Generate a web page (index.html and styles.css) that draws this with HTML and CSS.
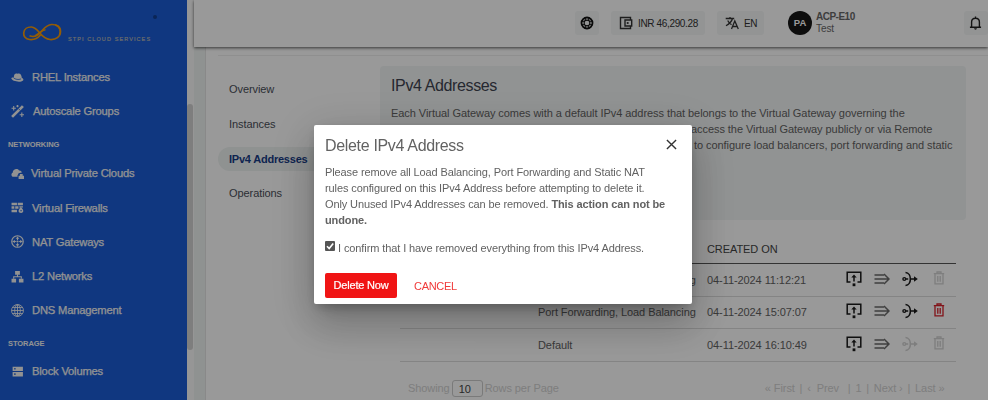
FILE: index.html
```html
<!DOCTYPE html>
<html lang="en">
<head>
<meta charset="utf-8">
<title>IPv4 Addresses</title>
<link rel="stylesheet" href="styles.css">
</head>
<body>
<svg class="defs" width="0" height="0">
  <symbol id="assign" viewBox="0 0 16 16"><path d="M4.500 11H1.200V1.200h13.600V11h-3.300" fill="none" stroke="currentColor" stroke-width="1.500"/><path d="M8 10.500V5" stroke="currentColor" stroke-width="1.500"/><path d="M5.300 6.600 8 3.400l2.700 3.200z" fill="currentColor"/><path d="M6.600 12.400h2.800v2.800H6.600z" fill="currentColor"/></symbol>
  <symbol id="forward" viewBox="0 0 16 16"><path d="M.5 4h9.500M.5 8h14M.5 12h9.500M10 3l5 5-5 5" fill="none" stroke="currentColor" stroke-width="1.500"/></symbol>
  <symbol id="balance" viewBox="0 0 16 16"><circle cx="2.300" cy="8" r="1.400" fill="none" stroke="currentColor" stroke-width="1.400"/><path d="M3.700 8h2.500M3.500 1.500c6.500.3 6.500 12.700 0 13M8.500 8h5" fill="none" stroke="currentColor" stroke-width="1.600"/><path d="M12 5.200 15.800 8 12 10.800z" fill="currentColor"/></symbol>
  <symbol id="trash" viewBox="0 0 12 14"><path d="M.8 2.600h10.400M4 2.300V1h4v1.300M2 2.800v10h8v-10M4.800 5v5.700M7.200 5v5.700" fill="none" stroke="currentColor" stroke-width="1.300"/></symbol>
</svg>
<div class="app">
  <aside class="sidebar">
    <div class="brand">
      <svg class="logo" viewBox="0 0 40 18"><path d="M18.500 11.500C15 15.500 11 16.500 7.500 16 3.500 15.500 1.500 12.500 1.700 9.500 2 5.500 5.500 3.300 9.500 3.500 17 4 18 15 28 16c6 .5 10.500-3 10.500-8S34.500.800 29.500 1C23 1.300 20.500 8 15.500 11.500 13 13.200 10 13.300 7.500 12.300" fill="none" stroke="#f79a0a" stroke-width="1.700"/><path d="M13.500 12C17 10.500 19.500 6.500 23.500 6.200M33 1.300c5 1.500 6.500 6.500 4.300 10.500" fill="none" stroke="#f79a0a" stroke-width="1.500"/></svg>
      <span class="brand-name">STPI CLOUD SERVICES</span>
      <span class="pin"></span>
    </div>
    <nav class="menu">
      <a class="item"><svg viewBox="0 0 12 12"><path d="M2.500 6C3 2.500 4 2 6 2.500c3-.5 3.500 1 4 4 2 .5 2 2.500-.5 3.200C6 10.500.5 9 .3 6.800.3 6 1.500 5.800 2.500 6z" fill="currentColor"/><path d="M2.300 6.300c1.700 1.500 4.500 2 7 1" stroke="#1b5dd5" stroke-width=".7" fill="none"/></svg><span>RHEL Instances</span></a>
      <a class="item wand"><svg viewBox="0 0 12 12"><path d="M1 11 11 1" stroke="currentColor" stroke-width="2.500"/><path d="m7 3.500 1.700 1.700" stroke="#1b5dd5" stroke-width=".7"/><path d="M2.500 1v4M.5 3h4M6 0v2M5 1h2M10 7v4M8 9h4" stroke="currentColor"/></svg><span>Autoscale Groups</span></a>
      <h2>NETWORKING</h2>
      <a class="item"><svg viewBox="0 0 12 12"><path d="M5 9H2.500C0 9-.2 6 1.600 5.300 1.300 2 6 .5 7.400 3.200 9.500 3 10 4.500 9.800 5.300 7.500 5 6.500 6 6.500 7L6 7.500V9z" fill="currentColor"/><path d="M7 8h5v3H7zM8.200 8V6.500h2.600V8" fill="currentColor"/></svg><span class="nudge">Virtual Private Clouds</span></a>
      <a class="item"><svg viewBox="0 0 12 12"><path d="M.5 1.500h5V4h-5zM6.200 1.500h4.800V4H6.200zM.5 4.800h2.600v2.300H.5zM3.900 4.800h3v2.300h-3zM.5 8h5v2.300h-5zM7.700 4.800H11V6H7.700z" fill="currentColor"/><path d="M9 5.600c3 2.400 3 5.400.3 5.400S6 9 9 5.600z" fill="currentColor"/><path d="M8.800 8.200h1v1.200h-1z" fill="#1b5dd5"/></svg><span>Virtual Firewalls</span></a>
      <a class="item"><svg viewBox="0 0 12 12"><circle cx="6" cy="6" r="5.300" fill="none" stroke="currentColor" stroke-width="1.100"/><circle cx="6" cy="6" r="1" fill="currentColor"/><path d="M6 1.500v3M6 7.500v3M1.500 6h3M7.500 6h3" stroke="currentColor"/><path d="m6 1.500 1.700 2H4.300zM6 10.500l1.700-2H4.300zM1.500 6l2-1.700v3.400zM10.500 6l-2-1.700v3.400z" fill="currentColor"/></svg><span>NAT Gateways</span></a>
      <a class="item"><svg viewBox="0 0 12 12"><path d="M3.800 1h4.400v3.300H3.800zM.5 8h4.200v3.500H.5zM7.300 8h4.200v3.500H7.300z" fill="currentColor"/><path d="M6 4v2.300M2.500 8V6.300h7V8" stroke="currentColor" fill="none"/></svg><span>L2 Networks</span></a>
      <a class="item"><svg viewBox="0 0 12 12"><g fill="none" stroke="currentColor" stroke-width=".8"><circle cx="6" cy="6" r="5.500"/><ellipse cx="6" cy="6" rx="2.600" ry="5.500"/><path d="M6 .5v11M.5 6h11M1.300 3.200h9.400M1.300 8.800h9.400"/></g></svg><span>DNS Management</span></a>
      <h2 class="storage">STORAGE</h2>
      <a class="item"><svg viewBox="0 0 12 12"><path d="M1.500 1.500H11v4H1.500zM1.500 6.500H11v4H1.500z" fill="currentColor"/><path d="M3 2.700h1.200v1.500H3zM3 7.700h1.200v1.500H3z" fill="#1b5dd5"/></svg><span>Block Volumes</span></a>
    </nav>
  </aside>
  <div class="track"><div class="thumb"></div></div>
  <div class="main">
    <header class="topbar">
      <span class="chip help"><svg viewBox="0 0 14 14"><circle cx="7" cy="7" r="5.500" fill="none" stroke="currentColor" stroke-width="1.800"/><circle cx="7" cy="7" r="2.900" fill="none" stroke="currentColor" stroke-width="1.100"/><path d="M5.300 1v3M8.700 1v3M5.300 10v3M8.700 10v3M1 5.300h3M1 8.700h3M10 5.300h3M10 8.700h3" stroke="currentColor"/></svg></span>
      <span class="chip wallet"><svg viewBox="0 0 14 14"><path d="M11.500 4V1.500h-10v11h10V10" fill="none" stroke="currentColor" stroke-width="1.400"/><path d="M6 4h6.700v6H6z" fill="none" stroke="currentColor" stroke-width="1.400"/><circle cx="8.700" cy="7" r="1.100" fill="currentColor"/></svg>INR 46,290.28</span>
      <span class="chip lang"><svg viewBox="0 0 14 14"><path d="M.7 2.500h8.500M5 1v1.500M7.500 2.500C6.800 5.500 4 8 1 9.700M2.700 4.500C3.500 6.300 5 7.700 6.500 8.700M6.500 13 9.800 5l3.500 8M7.700 10.500h4.300" fill="none" stroke="currentColor" stroke-width="1.300"/></svg>EN</span>
      <span class="avatar">PA</span>
      <span class="account"><b>ACP-E10</b><span>Test</span></span>
      <span class="chip bell"><svg viewBox="0 0 14 16"><path d="M1 12.500h12M2.800 12.500V7c0-5.500 8.400-5.500 8.400 0v5.500M7 2.800V1" fill="none" stroke="currentColor" stroke-width="1.500"/><path d="M5.500 13.700h3c0 2-3 2-3 0z" fill="currentColor"/></svg></span>
    </header>
    <div class="card">
      <nav class="tabs"><a>Overview</a><a>Instances</a><a class="active">IPv4 Addresses</a><a>Operations</a></nav>
      <section class="content">
        <div class="info">
          <h1>IPv4 Addresses</h1>
          <p>Each Virtual Gateway comes with a default IPv4 address that belongs to the Virtual Gateway governing the</p>
          <p class="l2">access the Virtual Gateway publicly or via Remote</p>
          <p class="l3">to configure load balancers, port forwarding and static</p>
        </div>
        <div class="table">
          <div class="row head"><span></span><span></span><span>CREATED ON</span></div>
          <div class="row"><span></span><span>Port Forwarding, Load Balancing</span><span>04-11-2024 11:12:21</span><span class="actions"><svg><use href="#assign"/></svg><svg class="mid"><use href="#forward"/></svg><svg><use href="#balance"/></svg><svg class="off bin"><use href="#trash"/></svg></span></div>
          <div class="row"><span><i class="mask"></i></span><span>Port Forwarding, Load Balancing</span><span>04-11-2024 15:07:07</span><span class="actions"><svg><use href="#assign"/></svg><svg class="mid"><use href="#forward"/></svg><svg><use href="#balance"/></svg><svg class="red bin"><use href="#trash"/></svg></span></div>
          <div class="row"><span></span><span>Default</span><span>04-11-2024 16:10:49</span><span class="actions"><svg><use href="#assign"/></svg><svg class="mid"><use href="#forward"/></svg><svg class="off"><use href="#balance"/></svg><svg class="off bin"><use href="#trash"/></svg></span></div>
        </div>
        <div class="pager">
          <span>Showing</span><span class="count">10</span><span>Rows per Page</span>
          <span class="pages"><span>« First</span><span>|</span><span>‹&nbsp; Prev</span><span class="gap">|</span><span>1</span><span>|</span><span>Next ›</span><span>|</span><span>Last »</span></span>
        </div>
      </section>
    </div>
  </div>
</div>
<div class="overlay">
  <i class="mask lit"></i>
  <div class="dialog">
    <div class="dialog-head"><h2>Delete IPv4 Address</h2><svg class="close" viewBox="0 0 12 12"><path d="m1 1 10 10M11 1 1 11" stroke="#333" stroke-width="1.500"/></svg></div>
    <p>Please remove all Load Balancing, Port Forwarding and Static NAT<br>rules configured on this IPv4 Address before attempting to delete it.<br>Only Unused IPv4 Addresses can be removed. <b>This action can not be<br>undone.</b></p>
    <div class="confirm"><span class="check"><svg viewBox="0 0 10 10"><path d="m2 5.200 2.200 2.300L8.200 2.500" fill="none" stroke="#fff" stroke-width="1.600"/></svg></span><span>I confirm that I have removed everything from this IPv4 Address.</span></div>
    <div class="buttons"><span class="delete">Delete Now</span><span class="cancel">CANCEL</span></div>
  </div>
</div>
</body>
</html>
```
FILE: styles.css
```css
* { box-sizing: border-box; }
body { margin: 0; width: 988px; height: 400px; overflow: hidden; background: #fff; font-family: "Liberation Sans", Arial, sans-serif; font-size: 11px; letter-spacing: -.08px; color: #626262; }
h1, h2, p { margin: 0; font-weight: 400; }
.defs { position: absolute; }
.app { display: flex; height: 400px; }

.sidebar { width: 187px; background: #1b5dd5; color: #f4f4f4; overflow: hidden; flex: none; }
.brand { display: flex; height: 60px; padding-left: 22px; }
.logo { width: 40px; height: 19px; margin-top: 23px; }
.brand-name { margin: 35px 0 0 6px; font-size: 5.5px; line-height: 9px; letter-spacing: 1.1px; color: #b4b4b4; -webkit-text-stroke: .2px; white-space: nowrap; width: 85px; }
.pin { width: 4px; height: 4px; border-radius: 50%; background: #123e91; margin: 15px 0 0 0; }
.menu .item { display: flex; align-items: center; height: 34.2px; padding-left: 11px; font-size: 11.2px; letter-spacing: -.18px; -webkit-text-stroke: .25px; }
.item svg { width: 13px; height: 13px; margin-right: 8px; flex: none; }
.item.wand svg { margin-right: 9px; }
.item .nudge { margin-left: -1px; }
.menu h2 { height: 28px; padding: 11px 0 0 8px; font-size: 7.5px; line-height: 12px; font-weight: 700; }
.menu .storage { height: 27px; }

.track { width: 7px; background: #fafafa; padding-top: 104px; flex: none; }
.thumb { width: 6px; height: 246px; background: #d2d2d2; border-radius: 3px; }
.main { flex: 1; background: #eff3f2; min-width: 0; }
.topbar { position: relative; height: 47px; background: #fff; box-shadow: 0 1px 3px rgba(0,0,0,.65); display: flex; align-items: flex-start; padding: 11px 0 0 381px; white-space: nowrap; }
.chip { height: 24px; background: #f5f7f7; border-radius: 3px; display: flex; align-items: center; color: #333; font-size: 10px; letter-spacing: -.35px; margin-right: 12px; flex: none; }
.chip svg { width: 14px; height: 14px; }
.help { width: 24px; justify-content: center; color: #111; }
.wallet { width: 94px; padding-left: 8px; gap: 5px; }
.lang { width: 47px; padding-left: 8px; gap: 5px; margin-right: 24px; }
.avatar { width: 24px; height: 24px; border-radius: 50%; background: #161616; color: #fff; font-size: 9.5px; font-weight: 700; line-height: 24px; text-align: center; flex: none; }
.account { display: flex; flex-direction: column; font-size: 10px; line-height: 12px; margin-left: 4px; width: 157px; color: #686868; }
.account b { letter-spacing: -.5px; }
.bell { width: 24px; padding-left: 5px; margin: 0; color: #222; flex: none; }
.bell svg { width: 13px; height: 16px; }

.card { margin-left: 11px; height: 353px; background: #fff; border-left: 1px solid #e4e4e4; display: flex; padding-top: 8px; }
.tabs { width: 162px; margin-left: 12px; border-top: 1px solid #eee; padding-top: 21px; flex: none; }
.tabs a { display: block; height: 24px; line-height: 24px; padding-left: 11px; margin-bottom: 10.800px; width: 132px; border-radius: 12px; color: #4a4e58; }
.tabs .active { background: #eff3f2; color: #173c86; font-weight: 700; letter-spacing: -.22px; }
.content { flex: 1; border-top: 1px solid #eee; padding-top: 10px; }
.info { width: 586px; height: 154px; background: #f2f5f5; border-radius: 4px; padding: 10px 0 0 11px; }
.info h1 { font-size: 16px; letter-spacing: -.37px; line-height: 20px; margin-bottom: 9px; color: #3f4350; }
.info p { line-height: 16px; letter-spacing: -.06px; white-space: nowrap; }
.info .l2 { padding-left: 300px; }
.info .l3 { padding-left: 303px; }
.table { margin: 14px 0 0 20px; width: 556px; }
.row { display: grid; grid-template-columns: 138px 169px 137px 112px; height: 32.600px; align-items: center; border-bottom: 1px solid #dcdcdc; white-space: nowrap; }
.row.head { height: 30px; border-color: #555; color: #444; }
.mask { display: block; width: 80px; height: 12px; margin-left: -3px; border-radius: 6px; background: #fff; }
.mask.lit { position: absolute; left: 400px; top: 339px; background: rgba(255,255,255,.02); }
.actions { display: flex; gap: 12px; margin-left: 2px; color: #1a1a1a; position: relative; top: -1px; }
.actions svg { width: 16px; height: 16px; }
.actions .bin { width: 12px; height: 14px; margin-left: 3px; }
.actions .mid { color: #6a6a6a; }
.actions .off { color: #d2d2d2; }
.actions .red { color: #d9202a; }
.pager { display: flex; align-items: center; margin: 18px 0 0 28px; height: 17px; color: #d2d2d2; white-space: nowrap; }
.count { width: 31px; height: 17px; border: 1px solid #ccc; border-radius: 3px; margin: 0 2px; padding-left: 6px; color: #444; line-height: 17px; }
.pages { display: flex; gap: 4.800px; margin-left: 206px; }
.pages .gap { margin-left: 4px; }

.overlay { position: fixed; inset: 0; background: rgba(0,0,0,.4); }
.dialog { position: absolute; left: 314px; top: 125px; width: 378px; height: 179px; background: #fff; border-radius: 2px; padding: 10px 11px; box-shadow: 0 11px 15px -7px rgba(0,0,0,.2), 0 24px 38px 3px rgba(0,0,0,.14), 0 9px 46px 8px rgba(0,0,0,.12), 0 3px 10px rgba(0,0,0,.12); white-space: nowrap; color: #626262; }
.dialog-head { display: flex; justify-content: space-between; height: 30px; }
.dialog-head h2 { font-size: 16px; letter-spacing: -.33px; line-height: 21px; }
.close { width: 11px; height: 11px; margin: 4px 4px 0 0; }
.dialog p { line-height: 15.900px; letter-spacing: -.11px; }
.confirm { display: flex; align-items: center; gap: 3px; height: 16px; margin-top: 11px; letter-spacing: -.1px; }
.check { width: 10px; height: 10px; border-radius: 1px; background: #555; display: flex; margin-top: -3px; }
.check svg { width: 10px; height: 10px; }
.buttons { display: flex; align-items: center; margin-top: 17.500px; }
.delete { width: 72px; height: 25px; line-height: 25px; text-align: center; background: #f01414; color: #fff; border-radius: 2px; letter-spacing: -.2px; -webkit-text-stroke: .2px; }
.cancel { margin-left: 17px; color: #f03a3a; letter-spacing: -.3px; }
```
